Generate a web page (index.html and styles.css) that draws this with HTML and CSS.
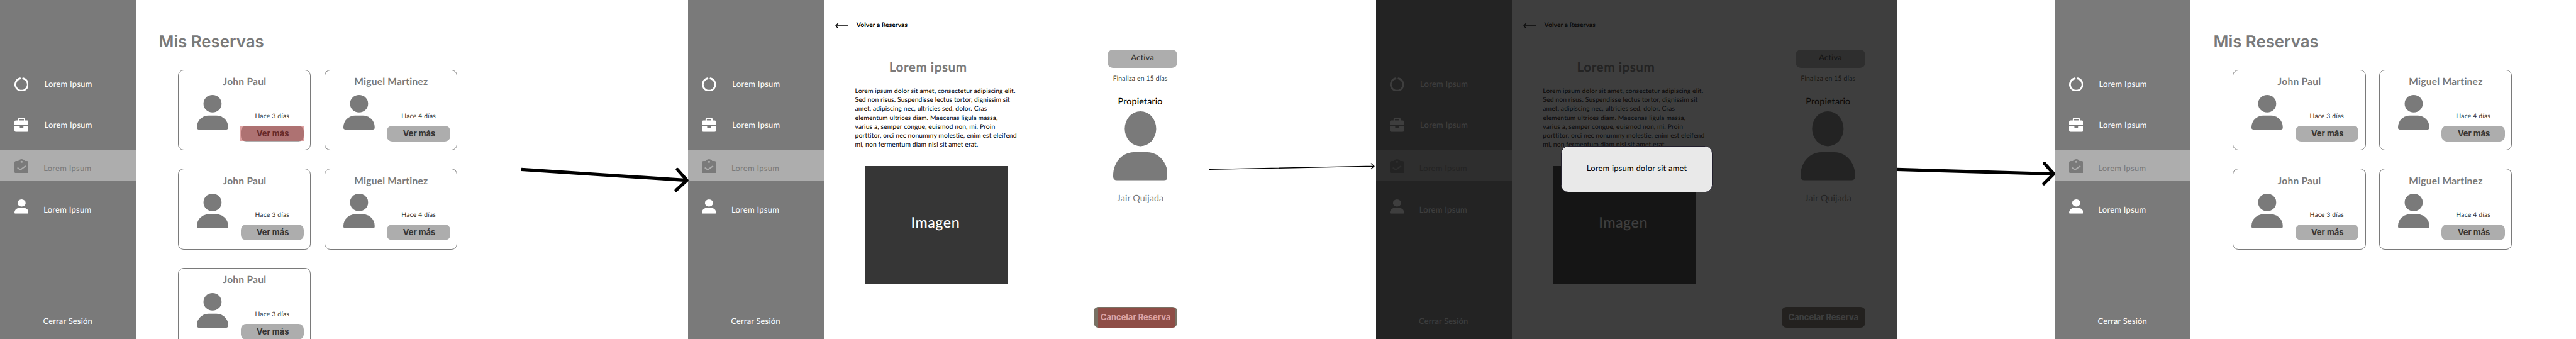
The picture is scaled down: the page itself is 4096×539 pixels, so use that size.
FILE: index.html
```html
<!DOCTYPE html>
<html lang="es">
<head>
<meta charset="utf-8">
<title>Mis Reservas</title>
<link rel="stylesheet" href="styles.css">
</head>
<body>
<svg class="sprite" aria-hidden="true">
  <symbol id="i-ring" viewBox="0 0 35 35"><path d="M13.7 2.7A15.3 15.3 0 1 0 21.3 2.7" fill="none" stroke="currentColor" stroke-width="4.4" stroke-linecap="round"/></symbol>
  <symbol id="i-case" viewBox="0 0 35 35"><path fill="currentColor" fill-rule="evenodd" d="M0 18.2V11Q0 7 4 7H9V4Q9 0 13 0H22.4Q26.3 0 26.3 4V7H31Q35 7 35 11V18.2ZM12.2 7H23.2V3.7H12.2ZM0 20.8H13V24Q13 26 15 26H20Q22 26 22 24V20.8H35V31Q35 35 31 35H4Q0 35 0 31Z"/></symbol>
  <symbol id="i-clip" viewBox="0 0 35 35"><path fill="currentColor" fill-rule="evenodd" d="M4.5 4.5H9.5C12 1.4 14.5 0 17.5 0S23 1.4 25.500 4.500H30.500Q35 4.500 35 9V30.500Q35 35 30.500 35H4.500Q0 35 0 30.500V9Q0 4.500 4.500 4.500ZM17.500 4.100A2.900 2.400 0 1 0 17.500 8.900A2.900 2.400 0 1 0 17.500 4.100Z"/><path d="M8.300 21.700L14.500 26L26.700 17.700" fill="none" stroke="#adadad" stroke-width="3.200" stroke-linecap="round" stroke-linejoin="round"/></symbol>
  <symbol id="i-user" viewBox="0 0 77 85" preserveAspectRatio="none"><ellipse cx="38.500" cy="21.500" rx="22.200" ry="21.500" fill="currentColor"/><path fill="currentColor" d="M0 79C0 63 13 50.400 29 50.400H48C64 50.400 77 63 77 79V80.500Q77 85 72 85H5Q0 85 0 80.500Z"/></symbol>
</svg>

<div class="board">
  <section class="screen">
    <aside class="sidebar">
      <nav class="nav">
        <a class="nav-item"><svg class="nav-icon"><use href="#i-ring"/></svg><span>Lorem Ipsum</span></a>
        <a class="nav-item"><svg class="nav-icon"><use href="#i-case"/></svg><span>Lorem Ipsum</span></a>
        <a class="nav-item active"><svg class="nav-icon"><use href="#i-clip"/></svg><span>Lorem Ipsum</span></a>
        <a class="nav-item last"><svg class="nav-icon"><use href="#i-user"/></svg><span>Lorem Ipsum</span></a>
      </nav>
      <a class="logout">Cerrar Sesión</a>
    </aside>
    <main class="list">
      <h1 class="list-title">Mis Reservas</h1>
      <div class="cards">
        <article class="card"><h2 class="card-name">John Paul</h2><div class="card-body"><svg class="card-avatar"><use href="#i-user"/></svg><div class="card-side"><p class="card-date">Hace 3 días</p><button class="card-btn">Ver más<span class="hotspot"></span></button></div></div></article>
        <article class="card"><h2 class="card-name">Miguel Martinez</h2><div class="card-body"><svg class="card-avatar"><use href="#i-user"/></svg><div class="card-side"><p class="card-date">Hace 4 días</p><button class="card-btn">Ver más</button></div></div></article>
        <article class="card"><h2 class="card-name">John Paul</h2><div class="card-body"><svg class="card-avatar"><use href="#i-user"/></svg><div class="card-side"><p class="card-date">Hace 3 días</p><button class="card-btn">Ver más</button></div></div></article>
        <article class="card"><h2 class="card-name">Miguel Martinez</h2><div class="card-body"><svg class="card-avatar"><use href="#i-user"/></svg><div class="card-side"><p class="card-date">Hace 4 días</p><button class="card-btn">Ver más</button></div></div></article>
        <article class="card"><h2 class="card-name">John Paul</h2><div class="card-body"><svg class="card-avatar"><use href="#i-user"/></svg><div class="card-side"><p class="card-date">Hace 3 días</p><button class="card-btn">Ver más</button></div></div></article>
      </div>
    </main>
  </section>

  <svg class="link" viewBox="0 0 409 832"><path class="link-heavy" d="M0 416L406 442.700"/><path class="link-heavy round" d="M383 416L406.500 442.700L380 467"/></svg>

  <section class="screen">
    <aside class="sidebar">
      <nav class="nav">
        <a class="nav-item"><svg class="nav-icon"><use href="#i-ring"/></svg><span>Lorem Ipsum</span></a>
        <a class="nav-item"><svg class="nav-icon"><use href="#i-case"/></svg><span>Lorem Ipsum</span></a>
        <a class="nav-item active"><svg class="nav-icon"><use href="#i-clip"/></svg><span>Lorem Ipsum</span></a>
        <a class="nav-item last"><svg class="nav-icon"><use href="#i-user"/></svg><span>Lorem Ipsum</span></a>
      </nav>
      <a class="logout">Cerrar Sesión</a>
    </aside>
    <main class="detail">
      <a class="back"><svg class="back-icon" viewBox="0 0 32.400 15"><path d="M32.400 7.500H1.500M7.500 1L1.300 7.500L7.500 14"/></svg><span>Volver a Reservas</span></a>
      <div class="detail-body">
        <div class="info">
          <h1 class="info-title">Lorem ipsum</h1>
          <p class="info-text">Lorem ipsum dolor sit amet, consectetur adipiscing elit.<br>Sed non risus. Suspendisse lectus tortor, dignissim sit<br>amet, adipiscing nec, ultricies sed, dolor. Cras<br>elementum ultrices diam. Maecenas ligula massa,<br>varius a, semper congue, euismod non, mi. Proin<br>porttitor, orci nec nonummy molestie, enim est eleifend<br>mi, non fermentum diam nisl sit amet erat.</p>
          <div class="picture">Imagen</div>
        </div>
        <div class="status">
          <span class="badge">Activa</span>
          <div class="owner">
            <p class="owner-end">Finaliza en 15 días</p>
            <p class="owner-role">Propietario</p>
            <svg class="owner-avatar"><use href="#i-user"/></svg>
            <p class="owner-name">Jair Quijada</p>
          </div>
          <button class="cancel">Cancelar Reserva<span class="hotspot"></span></button>
        </div>
      </div>
    </main>
  </section>

  <svg class="link" viewBox="0 0 409 832"><path class="link-light" d="M0 416L404.500 408M396.500 401L404.500 408L396.500 415"/></svg>

  <section class="screen">
    <aside class="sidebar">
      <nav class="nav">
        <a class="nav-item"><svg class="nav-icon"><use href="#i-ring"/></svg><span>Lorem Ipsum</span></a>
        <a class="nav-item"><svg class="nav-icon"><use href="#i-case"/></svg><span>Lorem Ipsum</span></a>
        <a class="nav-item active"><svg class="nav-icon"><use href="#i-clip"/></svg><span>Lorem Ipsum</span></a>
        <a class="nav-item last"><svg class="nav-icon"><use href="#i-user"/></svg><span>Lorem Ipsum</span></a>
      </nav>
      <a class="logout">Cerrar Sesión</a>
    </aside>
    <main class="detail">
      <a class="back"><svg class="back-icon" viewBox="0 0 32.400 15"><path d="M32.400 7.500H1.500M7.500 1L1.300 7.500L7.500 14"/></svg><span>Volver a Reservas</span></a>
      <div class="detail-body">
        <div class="info">
          <h1 class="info-title">Lorem ipsum</h1>
          <p class="info-text">Lorem ipsum dolor sit amet, consectetur adipiscing elit.<br>Sed non risus. Suspendisse lectus tortor, dignissim sit<br>amet, adipiscing nec, ultricies sed, dolor. Cras<br>elementum ultrices diam. Maecenas ligula massa,<br>varius a, semper congue, euismod non, mi. Proin<br>porttitor, orci nec nonummy molestie, enim est eleifend<br>mi, non fermentum diam nisl sit amet erat.</p>
          <div class="picture">Imagen</div>
        </div>
        <div class="status">
          <span class="badge">Activa</span>
          <div class="owner">
            <p class="owner-end">Finaliza en 15 días</p>
            <p class="owner-role">Propietario</p>
            <svg class="owner-avatar"><use href="#i-user"/></svg>
            <p class="owner-name">Jair Quijada</p>
          </div>
          <button class="cancel">Cancelar Reserva</button>
        </div>
      </div>
    </main>
    <div class="backdrop"></div>
    <div class="modal" role="dialog">Lorem ipsum dolor sit amet</div>
  </section>

  <svg class="link short" viewBox="0 0 387 832"><path class="link-heavy" d="M0 416L385 427"/><path class="link-heavy round" d="M362.500 401L385.500 427L361 451"/></svg>

  <section class="screen">
    <aside class="sidebar">
      <nav class="nav">
        <a class="nav-item"><svg class="nav-icon"><use href="#i-ring"/></svg><span>Lorem Ipsum</span></a>
        <a class="nav-item"><svg class="nav-icon"><use href="#i-case"/></svg><span>Lorem Ipsum</span></a>
        <a class="nav-item active"><svg class="nav-icon"><use href="#i-clip"/></svg><span>Lorem Ipsum</span></a>
        <a class="nav-item last"><svg class="nav-icon"><use href="#i-user"/></svg><span>Lorem Ipsum</span></a>
      </nav>
      <a class="logout">Cerrar Sesión</a>
    </aside>
    <main class="list">
      <h1 class="list-title">Mis Reservas</h1>
      <div class="cards">
        <article class="card"><h2 class="card-name">John Paul</h2><div class="card-body"><svg class="card-avatar"><use href="#i-user"/></svg><div class="card-side"><p class="card-date">Hace 3 días</p><button class="card-btn">Ver más</button></div></div></article>
        <article class="card"><h2 class="card-name">Miguel Martinez</h2><div class="card-body"><svg class="card-avatar"><use href="#i-user"/></svg><div class="card-side"><p class="card-date">Hace 4 días</p><button class="card-btn">Ver más</button></div></div></article>
        <article class="card"><h2 class="card-name">John Paul</h2><div class="card-body"><svg class="card-avatar"><use href="#i-user"/></svg><div class="card-side"><p class="card-date">Hace 3 días</p><button class="card-btn">Ver más</button></div></div></article>
        <article class="card"><h2 class="card-name">Miguel Martinez</h2><div class="card-body"><svg class="card-avatar"><use href="#i-user"/></svg><div class="card-side"><p class="card-date">Hace 4 días</p><button class="card-btn">Ver más</button></div></div></article>
      </div>
    </main>
  </section>
</div>
</body>
</html>
```
FILE: styles.css
```css
/* 1rem is ten design units */
html { font-size: 6.4759px; }
* { box-sizing: border-box; margin: 0; }
body { background: #fff; font-family: Lato, "Open Sans", sans-serif; text-rendering: geometricPrecision; overflow: hidden; }
button { border: 0; padding: 0; font: inherit; }
.sprite { display: none; }

.board { display: flex; width: 632.5rem; height: 100vh; overflow: hidden; }
.screen { position: relative; display: flex; flex: none; width: 128rem; height: 100%; overflow: hidden; }

/* Flow arrows between screens */
.link { position: relative; z-index: 2; flex: none; width: 40.9rem; height: 83.2rem; overflow: visible; fill: none; stroke: #000; }
.link.short { width: 38.7rem; }
.link-heavy { stroke-width: 8; }
.link-heavy.round { stroke-linecap: round; stroke-linejoin: round; }
.link-light { stroke-width: 2; }

/* Sidebar */
.sidebar { display: flex; flex-direction: column; flex: none; width: 33.4rem; padding: 15.7rem 0 3.1rem; background: #7a7a7a; color: #fff; font-size: 2rem; line-height: 2.4rem; white-space: nowrap; }
.nav { display: flex; flex-direction: column; }
.nav-item { display: flex; align-items: center; gap: 3.9rem; height: 10rem; padding-left: 3.5rem; letter-spacing: .045rem; }
.nav-icon { flex: none; width: 3.5rem; height: 3.5rem; }
.nav-item.active { height: 7.68rem; margin: 1.12rem 0 1.25rem; gap: 3.7rem; background: #adadad; color: #7a7a7a; }
.nav-item.active .nav-icon { margin-top: .18rem; }
.nav-item.active span { margin-top: 1.48rem; }
.nav-item.last { gap: 3.7rem; }
.nav-item.last span { margin-top: 1.56rem; }
.logout { margin-top: auto; padding-left: 10.57rem; letter-spacing: .03rem; }

/* Reservation list */
.list { flex: 1; padding: 7.92rem 0 0 5.4rem; white-space: nowrap; }
.list-title { padding-left: .2rem; font: 600 4rem/4.8rem Inter, sans-serif; letter-spacing: -.005rem; color: #7a7a7a; }
.cards { display: grid; grid-template-columns: 32.6rem 32.6rem; grid-auto-rows: 19.85rem; gap: 4.45rem 3.37rem; margin: 4.4rem 0 0 4.96rem; }
.card { padding-top: 1.45rem; border: .2rem solid #7a7a7a; border-radius: 1.4rem; }
.card-name { font-size: 2.4rem; line-height: 2.88rem; font-weight: 700; letter-spacing: .04rem; text-align: center; color: #7a7a7a; }
.card-body { display: flex; gap: 3.02rem; padding: 1.69rem 0 0 4.44rem; }
.card-avatar { flex: none; width: 7.7rem; height: 8.5rem; color: #7a7a7a; }
.card-side { display: flex; flex-direction: column; gap: 1.31rem; width: 15.5rem; padding-top: 4.36rem; }
.card-date { font-size: 1.6rem; line-height: 1.92rem; letter-spacing: .03rem; text-align: center; color: #363636; }
.card-btn { position: relative; height: 3.84rem; padding-left: .3rem; border-radius: 1.3rem; background: #adadad; color: #363636; font: 700 2rem/3.84rem Inter, sans-serif; }
.hotspot { position: absolute; background: rgba(176, 26, 26, .4); }
.card-btn .hotspot { top: 0; left: -.2rem; width: 15.8rem; height: 3.64rem; }

/* Reservation detail */
.detail { flex: 1; padding-top: 5.3rem; background: #fff; white-space: nowrap; }
.back { display: flex; align-items: center; gap: 2rem; height: 2rem; padding-left: 2.76rem; font-size: 1.6rem; line-height: 2rem; font-weight: 700; letter-spacing: .005rem; color: #000; }
.back-icon { width: 3.24rem; height: 1.5rem; margin-top: .15rem; fill: none; stroke: #000; stroke-width: 2; stroke-linejoin: round; }
.detail-body { display: flex; gap: 18.63rem; padding-left: 7.65rem; }
.info { width: 40rem; padding-top: 7.39rem; }
.info-title { margin-right: 4.14rem; font-size: 3.2rem; line-height: 3.8rem; font-weight: 700; letter-spacing: .08rem; text-align: center; color: #7a7a7a; }
.info-text { margin-top: 2.82rem; font-size: 1.6rem; line-height: 2.2rem; letter-spacing: .018rem; color: #000; }
.picture { display: flex; align-items: center; justify-content: center; width: 34.95rem; height: 28.96rem; margin: 3.99rem 0 0 2.46rem; padding: 0 .4rem 1.34rem 0; background: #363636; color: #fff; font-size: 3.6rem; font-weight: 500; letter-spacing: .08rem; }
.status { display: flex; flex-direction: column; align-items: flex-end; width: 20.5rem; padding-top: 4.9rem; }
.badge { width: 17.1rem; height: 4.5rem; border-radius: 1.3rem; background: #adadad; color: #363636; font-size: 2rem; line-height: 3.86rem; font-weight: 600; letter-spacing: .02rem; text-align: center; }
.owner { display: flex; flex-direction: column; align-items: center; width: 16.2rem; margin-right: 1rem; padding-top: 1.68rem; }
.owner-end { font-size: 1.6rem; line-height: 2rem; letter-spacing: .03rem; color: #363636; }
.owner-role { margin-top: 3.47rem; font-size: 2.2rem; line-height: 2.6rem; font-weight: 500; letter-spacing: .02rem; color: #000; }
.owner-avatar { width: 13.4rem; height: 16.93rem; margin-top: .92rem; color: #7a7a7a; }
.owner-name { margin-top: 3.31rem; font-size: 2.2rem; line-height: 2.6rem; letter-spacing: .02rem; color: #7a7a7a; }
.cancel { position: relative; width: 20.5rem; height: 5rem; margin-top: 25.2rem; border-radius: 1.2rem; overflow: hidden; background: #787164; color: #fff; font: 700 2rem/5rem Inter, sans-serif; }
.cancel .hotspot { top: .07rem; left: 1.1rem; width: 18.8rem; height: 4.93rem; }

/* Confirmation */
.backdrop { position: absolute; inset: 0; background: rgba(14, 14, 14, .8); }
.modal { position: absolute; left: 45.5rem; top: 35.8rem; display: flex; align-items: center; justify-content: center; width: 37.2rem; height: 11.5rem; padding-bottom: .6rem; border: .15rem solid #221f2c; border-radius: 1.8rem; background: #e9e9e9; color: #000; font-size: 2rem; letter-spacing: .035rem; white-space: nowrap; }
```
